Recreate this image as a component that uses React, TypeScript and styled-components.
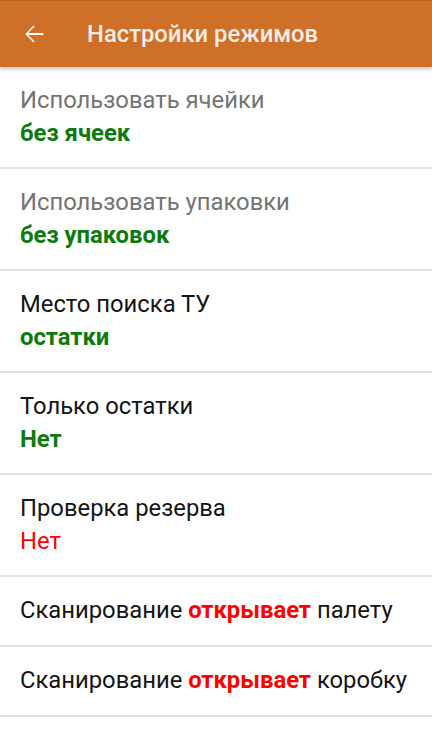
import React from 'react';
import styled, { createGlobalStyle } from 'styled-components';

const GlobalStyle = createGlobalStyle`
  html, body {
    margin: 0;
    padding: 0;
    background: #ffffff;
  }
  body {
    font-family: Roboto, "Noto Sans", "Liberation Sans", sans-serif;
  }
`;

const Screen = styled.div`
  width: 432px;
  min-height: 740px;
  background: #ffffff;
  display: flex;
  flex-direction: column;
`;

const Toolbar = styled.header`
  position: relative;
  z-index: 1;
  height: 67px;
  flex-shrink: 0;
  display: flex;
  align-items: center;
  background: #cf7028;
  border-top: 1px solid #bd5f1c;
  box-sizing: border-box;
  box-shadow: 0 2px 4px rgba(0, 0, 0, 0.25);
`;

const BackButton = styled.button`
  width: 28px;
  height: 28px;
  margin-left: 20px;
  padding: 0;
  border: none;
  background: transparent;
  display: flex;
  align-items: center;
  justify-content: center;
  color: #ffffff;
`;

const Title = styled.h1`
  margin: 0 0 0 39px;
  font-size: 23.8px;
  font-weight: 500;
  color: #f4ece6;
`;

const List = styled.ul`
  list-style: none;
  margin: 0;
  padding: 0;
`;

const Row = styled.li<{ $single?: boolean }>`
  padding: 17px 20px ${({ $single }) => ($single ? '18px' : '17px')};
  border-bottom: 2px solid #e3e3e3;
  font-size: 23.8px;
  line-height: 33px;
`;

const Label = styled.div<{ $muted?: boolean }>`
  color: ${({ $muted }) => ($muted ? '#737373' : '#141414')};
`;

const Value = styled.div<{ $tone: 'ok' | 'bad' }>`
  color: ${({ $tone }) => ($tone === 'ok' ? '#0b7b0b' : '#ff0000')};
  font-weight: ${({ $tone }) => ($tone === 'ok' ? 700 : 400)};
`;

const Accent = styled.span`
  color: #ff0000;
  font-weight: 700;
`;

type Setting = {
  label: string;
  value: string;
  tone: 'ok' | 'bad';
  muted?: boolean;
};

const settings: Setting[] = [
  { label: 'Использовать ячейки', value: 'без ячеек', tone: 'ok', muted: true },
  { label: 'Использовать упаковки', value: 'без упаковок', tone: 'ok', muted: true },
  { label: 'Место поиска ТУ', value: 'остатки', tone: 'ok' },
  { label: 'Только остатки', value: 'Нет', tone: 'ok' },
  { label: 'Проверка резерва', value: 'Нет', tone: 'bad' },
];

const scanRules = ['палету', 'коробку'];

export default function App(): React.JSX.Element {
  return (
    <Screen>
      <GlobalStyle />
      <Toolbar>
        <BackButton aria-label="Назад">
          <svg width="28" height="28" viewBox="0 0 24 24" fill="currentColor">
            <path d="M20 11.2H6.9l5.6-5.6-.9-.9L4.5 12l7.1 7.3.9-.9-5.6-5.6H20z" />
          </svg>
        </BackButton>
        <Title>Настройки режимов</Title>
      </Toolbar>
      <List>
        {settings.map((s) => (
          <Row key={s.label}>
            <Label $muted={s.muted}>{s.label}</Label>
            <Value $tone={s.tone}>{s.value}</Value>
          </Row>
        ))}
        {scanRules.map((what) => (
          <Row key={what} $single>
            <Label>
              Сканирование <Accent>открывает</Accent> {what}
            </Label>
          </Row>
        ))}
      </List>
    </Screen>
  );
}
